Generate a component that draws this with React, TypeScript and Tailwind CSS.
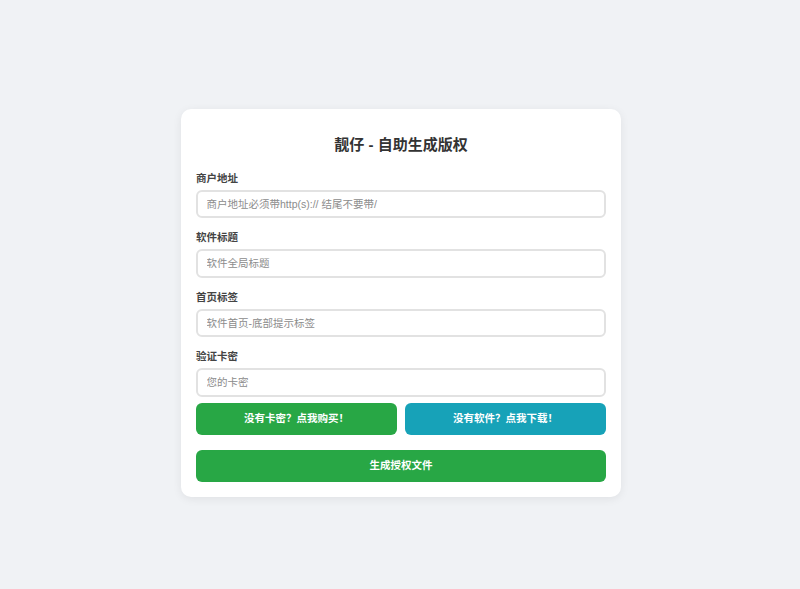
import React from "react";

function Field({ label, placeholder, last }: { label: string; placeholder: string; last?: boolean }) {
  return (
    <div className={last ? "" : "mb-[12px]"}>
      <div className="text-[10.5px] leading-[15px] font-bold text-[#444] mb-[4px]">{label}</div>
      <input
        className="block w-full h-[28.5px] rounded-[6px] border-2 border-[#e2e2e2] bg-white px-[8.5px] text-[10.5px] text-[#333] placeholder:text-[#8c8c8c] outline-none"
        placeholder={placeholder}
      />
    </div>
  );
}

export default function App() {
  return (
    <div
      className="w-full min-h-[589px] bg-[#f0f2f5] flex justify-center pt-[109px] pl-[2px]"
      style={{ fontFamily: '"Liberation Sans", "Noto Sans CJK SC", sans-serif' }}
    >
      <div className="w-[440px] h-[387.7px] bg-white rounded-[10px] shadow-[0_2px_10px_rgba(0,0,0,0.07)] px-[15px] pt-[25px]">
        <h1 className="text-center text-[15px] leading-[22px] font-bold text-[#333] mb-[14.5px]">靓仔 - 自助生成版权</h1>
        <Field label="商户地址" placeholder="商户地址必须带http(s):// 结尾不要带/" />
        <Field label="软件标题" placeholder="软件全局标题" />
        <Field label="首页标签" placeholder="软件首页-底部提示标签" />
        <Field label="验证卡密" placeholder="您的卡密" last />
        <div className="flex gap-[8px] mt-[6.5px]">
          <button className="flex-1 h-[32.3px] rounded-[6px] bg-[#28a745] text-white text-[10.5px] font-bold">没有卡密？点我购买！</button>
          <button className="flex-1 h-[32.3px] rounded-[6px] bg-[#17a2b8] text-white text-[10.5px] font-bold">没有软件？点我下载！</button>
        </div>
        <button className="mt-[14.3px] w-full h-[32.7px] rounded-[6px] bg-[#28a745] text-white text-[10.5px] font-bold">生成授权文件</button>
      </div>
    </div>
  );
}
